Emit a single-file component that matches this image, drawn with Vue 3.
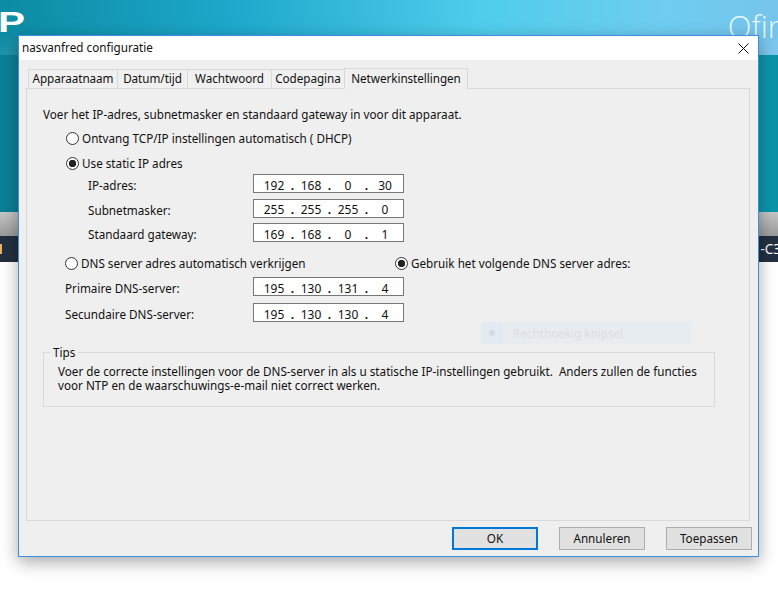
<script setup>
const tabs = ['Apparaatnaam', 'Datum/tijd', 'Wachtwoord', 'Codepagina', 'Netwerkinstellingen']
const ipFields = [
  { label: 'IP-adres:', parts: ['192', '168', '0', '30'] },
  { label: 'Subnetmasker:', parts: ['255', '255', '255', '0'] },
  { label: 'Standaard gateway:', parts: ['169', '168', '0', '1'] }
]
const dnsFields = [
  { label: 'Primaire DNS-server:', parts: ['195', '130', '131', '4'] },
  { label: 'Secundaire DNS-server:', parts: ['195', '130', '130', '4'] }
]
</script>

<template>
  <div class="desktop">
    <header class="hero">
      <div class="hero-top">
        <span class="logo">P</span>
        <span class="brand">Qfin</span>
      </div>
    </header>
    <div class="greybar"></div>
    <div class="navbar">
      <span class="nav-mark"></span>
      <span class="nav-text">-C3</span>
    </div>

    <section class="dialog">
      <div class="titlebar">
        <span>nasvanfred configuratie</span>
        <svg class="close" width="11" height="11" viewBox="0 0 11 11">
          <path d="M0.5 0.5L10.5 10.5M10.5 0.5L0.5 10.5" stroke="#111" stroke-width="1" fill="none" />
        </svg>
      </div>
      <div class="body">
        <nav class="tabs">
          <span v-for="(t, i) in tabs" :key="t" class="tab" :class="['tab' + i, { active: i === 4 }]">{{ t }}</span>
        </nav>
        <div class="panel">
          <p class="intro">Voer het IP-adres, subnetmasker en standaard gateway in voor dit apparaat.</p>

          <label class="radio-row r1"><span class="radio"></span>Ontvang TCP/IP instellingen automatisch ( DHCP)</label>
          <label class="radio-row r2"><span class="radio on"></span>Use static IP adres</label>

          <div class="fields ip">
            <div v-for="f in ipFields" :key="f.label" class="field-row">
              <span class="flabel">{{ f.label }}</span>
              <div class="ipbox">
                <template v-for="(p, i) in f.parts" :key="i">
                  <span class="oct">{{ p }}</span>
                  <span v-if="i < 3" class="dot">.</span>
                </template>
              </div>
            </div>
          </div>

          <div class="dns-choice">
            <label class="radio-row"><span class="radio"></span>DNS server adres automatisch verkrijgen</label>
            <label class="radio-row"><span class="radio on"></span>Gebruik het volgende DNS server adres:</label>
          </div>

          <div class="fields dns">
            <div v-for="f in dnsFields" :key="f.label" class="field-row">
              <span class="flabel">{{ f.label }}</span>
              <div class="ipbox">
                <template v-for="(p, i) in f.parts" :key="i">
                  <span class="oct">{{ p }}</span>
                  <span v-if="i < 3" class="dot">.</span>
                </template>
              </div>
            </div>
          </div>

          <fieldset class="tips">
            <legend>Tips</legend>
            <p>Voer de correcte instellingen voor de DNS-server in als u statische IP-instellingen gebruikt.&nbsp; Anders zullen de functies<br />voor NTP en de waarschuwings-e-mail niet correct werken.</p>
          </fieldset>

          <div class="ghost"><span class="ghost-icon"><i></i></span><span class="ghost-text">Rechthoekig knipsel</span></div>
        </div>
        <footer class="actions">
          <button class="btn primary">OK</button>
          <button class="btn">Annuleren</button>
          <button class="btn">Toepassen</button>
        </footer>
      </div>
    </section>
  </div>
</template>

<style>
html, body { margin: 0; background: #fff; }
</style>

<style scoped>
.desktop {
  position: relative;
  width: 778px;
  height: 596px;
  overflow: hidden;
  background: #fff;
  font-family: "Noto Sans", "DejaVu Sans", sans-serif;
  font-size: 11.7px;
  color: #111;
}
.hero {
  height: 212px;
  background: linear-gradient(90deg, #0a7f96 0%, #12a2bb 35%, #1fb4cb 65%, #18a9c0 85%, #0c93a8 100%);
}
.hero-top {
  height: 55px;
  display: flex;
  justify-content: space-between;
  overflow: hidden;
  background: linear-gradient(180deg, rgba(255,255,255,0) 60%, rgba(255,255,255,.08) 100%),
    linear-gradient(90deg, #0c8ba3 0%, #1ea8cb 30%, #50cdec 62%, #6ecdf0 85%, #76c4ec 100%);
}
.logo {
  width: 25px;
  height: 40px;
  overflow: hidden;
  font: bold 30px/44px "Liberation Sans", sans-serif;
  color: #fff;
  text-align: right;
  transform: scaleX(1.35);
  transform-origin: right center;
}
.brand {
  margin: 7px -8px 0 0;
  font: 300 31px/38px "Open Sans", sans-serif;
  color: #e8f8fd;
}
.greybar {
  height: 24px;
  background: linear-gradient(180deg, #c6c6c6, #9a9a9a);
}
.navbar {
  height: 26px;
  background: #232f40;
  display: flex;
  justify-content: space-between;
  align-items: center;
  color: #fff;
  font-size: 13.5px;
}
.nav-mark {
  width: 2px;
  height: 10px;
  background: #f0b060;
}
.nav-text {
  margin-right: -3px;
}
.dialog {
  position: absolute;
  left: 18px;
  top: 35px;
  width: 741px;
  height: 522px;
  box-sizing: border-box;
  border: 1px solid #3c8fe2;
  background: #efefef;
  box-shadow: 0 5px 16px rgba(0, 0, 0, .35);
  display: flex;
  flex-direction: column;
}
.titlebar {
  height: 24px;
  background: #fff;
  flex: none;
  display: flex;
  align-items: center;
  justify-content: space-between;
  box-sizing: border-box;
  padding: 0 9px 2px 3px;
}
.close {
  margin-top: 2px;
}
.body {
  flex: 1;
  display: flex;
  flex-direction: column;
  padding: 9px 8px 0 7px;
  min-height: 0;
}
.tabs {
  display: flex;
  align-items: flex-start;
  height: 19px;
  padding-left: 2px;
  position: relative;
  z-index: 1;
  flex: none;
}
.tab {
  box-sizing: border-box;
  height: 19px;
  line-height: 17px;
  border: 1px solid #d9d9d9;
  border-bottom: 0;
  border-right: 0;
  text-align: center;
  background: #f0f0f0;
  white-space: nowrap;
  letter-spacing: -.05px;
}
.tab0 { width: 89px; }
.tab1 { width: 70px; }
.tab2 { width: 84px; }
.tab3 { width: 73px; }
.tab.active {
  width: 124px;
  height: 21px;
  line-height: 19px;
  margin-top: -1px;
  background: #efefef;
  border-right: 1px solid #d9d9d9;
}
.panel {
  position: relative;
  box-sizing: border-box;
  height: 433px;
  flex: none;
  border: 1px solid #d9d9d9;
  background: #efefef;
  padding: 17px 16px 0;
}
.intro {
  margin: 0;
  height: 16px;
  line-height: 16px;
}
.radio-row {
  display: flex;
  align-items: center;
  height: 16px;
  white-space: nowrap;
}
.r1 { margin: 8px 0 0 23px; }
.r2 { margin: 9px 0 0 23px; }
.radio {
  box-sizing: border-box;
  width: 13px;
  height: 13px;
  border-radius: 50%;
  border: 1px solid #333;
  background: #fff;
  margin-right: 3px;
  flex: none;
}
.radio.on {
  background: radial-gradient(circle, #222 0 3.4px, #fff 4px);
}
.fields {
  display: flex;
  flex-direction: column;
}
.fields.ip {
  margin-top: 3px;
  gap: 5.5px;
  padding-left: 45px;
}
.fields.dns {
  margin-top: 6px;
  gap: 7px;
  padding-left: 22px;
}
.field-row {
  display: flex;
  align-items: center;
  height: 19px;
}
.flabel {
  white-space: nowrap;
  padding-top: 3px;
}
.ip .flabel { width: 165px; }
.dns .flabel { width: 188px; }
.ipbox {
  box-sizing: border-box;
  width: 151px;
  height: 19px;
  border: 1px solid #777;
  background: #fff;
  display: flex;
  align-items: center;
  padding: 3px 0 0 6px;
  font-size: 12px;
}
.oct {
  width: 28px;
  text-align: center;
}
.dot {
  width: 9px;
  text-align: center;
  font-weight: 700;
}
.dns-choice {
  margin: 13px 0 0 22px;
  display: flex;
  height: 16px;
}
.dns-choice .radio-row:first-child {
  width: 330px;
}
.tips {
  margin: 22px 0 0;
  width: 672px;
  height: 63px;
  box-sizing: border-box;
  border: 1px solid #d9d9d9;
  padding: 0 0 0 14px;
}
.tips legend {
  padding: 0 3px;
  margin-left: -8px;
  line-height: 16px;
}
.tips p {
  margin: 4px 0 0;
  line-height: 14px;
  white-space: nowrap;
}
.ghost {
  position: absolute;
  left: 454px;
  top: 233px;
  width: 210px;
  height: 22px;
  background: #e7ecf1;
  display: flex;
  align-items: center;
  color: #dcdde0;
}
.ghost-icon {
  width: 22px;
  height: 22px;
  background: #e3eaf2;
  display: flex;
  align-items: center;
  justify-content: center;
  margin-right: 10px;
}
.ghost-icon i {
  width: 6px;
  height: 6px;
  border-radius: 50%;
  background: #d5dbe2;
}
.actions {
  flex: 1;
  display: flex;
  justify-content: flex-end;
  gap: 21px;
  padding: 6px 0 0;
  margin-right: -2px;
}
.btn {
  box-sizing: border-box;
  width: 86px;
  height: 23px;
  border: 1px solid #adadad;
  background: #e1e1e1;
  font: inherit;
  color: #111;
  padding: 0 0 2px;
}
.btn.primary {
  border: 2px solid #0078d7;
}
</style>
